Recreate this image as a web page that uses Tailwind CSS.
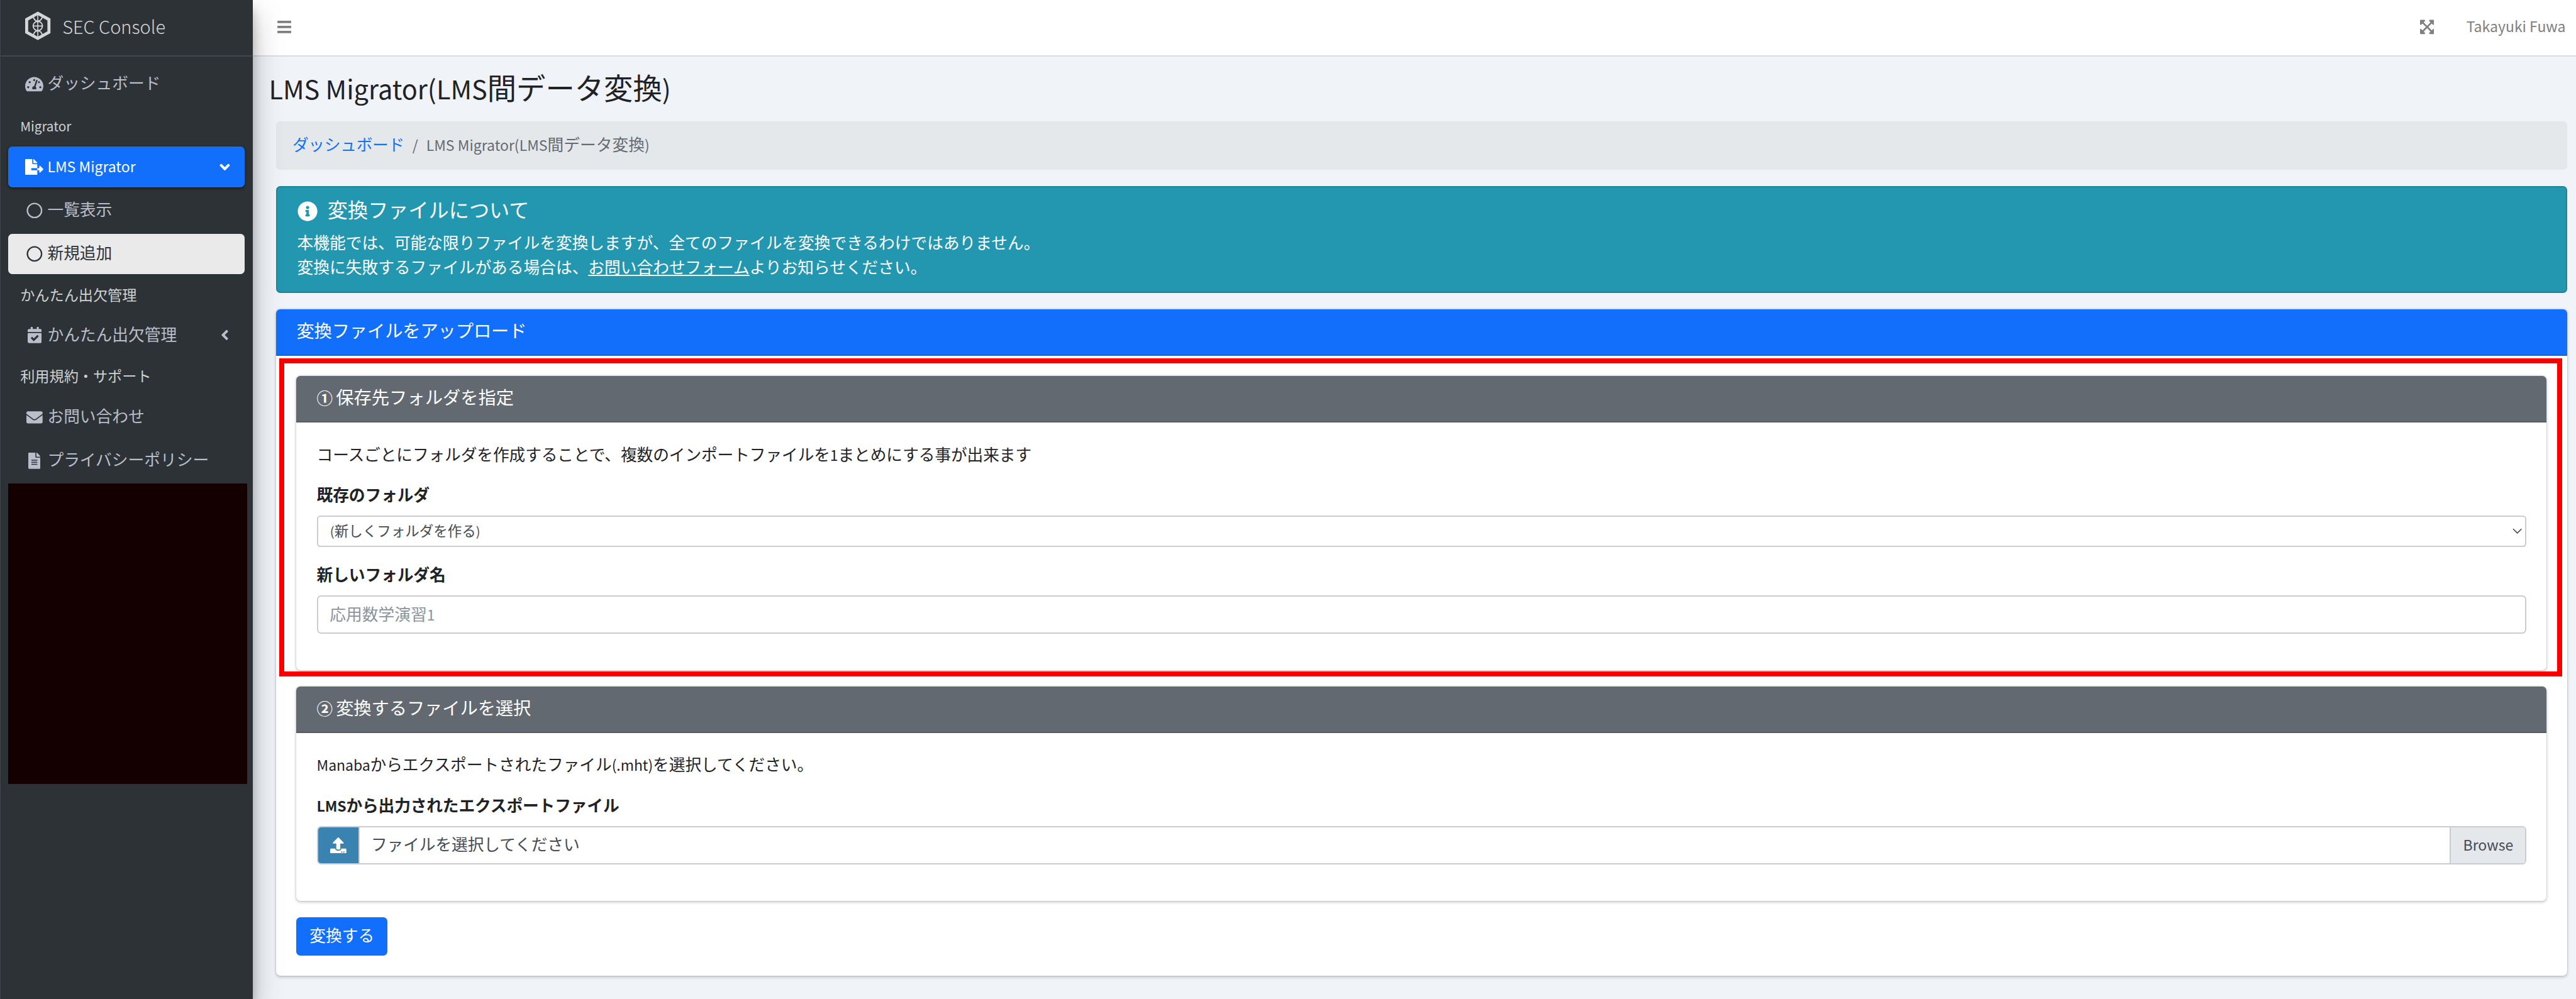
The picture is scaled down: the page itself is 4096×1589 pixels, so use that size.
<!DOCTYPE html>
<html lang="ja" class="text-[25.741px]">
<head>
<meta charset="utf-8">
<title>LMS Migrator | SEC Console</title>
<script src="https://cdn.jsdelivr.net/npm/@tailwindcss/browser@4"></script>
</head>
<body class="h-screen overflow-hidden bg-[#f0f4f8] font-[Inter,'Noto_Sans_CJK_JP',sans-serif] text-base leading-normal text-[#1f2327]">
<svg class="hidden">
  <symbol id="i-circle" viewBox="0 0 512 512"><path d="M256 8C119 8 8 119 8 256s111 248 248 248 248-111 248-248S393 8 256 8zm0 448c-110.5 0-200-89.5-200-200S145.5 56 256 56s200 89.5 200 200-89.5 200-200 200z"/></symbol>
  <symbol id="i-angle" viewBox="0 0 256 512"><path d="M31.7 239l136-136c9.4-9.4 24.6-9.4 33.9 0l22.6 22.6c9.4 9.4 9.4 24.6 0 33.9L127.9 256l96.4 96.4c9.4 9.4 9.4 24.6 0 33.9L201.7 409c-9.4 9.4-24.6 9.4-33.9 0l-136-136c-9.5-9.4-9.5-24.6-.1-34z"/></symbol>
</svg>
<div class="flex h-full">

  <!-- Sidebar -->
  <aside class="relative z-10 h-full w-[15.625rem] shrink-0 border-l border-[#3d4449] bg-[#2d3236] text-[#b9becb] shadow-[0_22px_45px_rgba(0,0,0,.25),0_16px_16px_rgba(0,0,0,.22)]">
    <div class="flex h-[3.5rem] items-center border-b-2 border-[#40484e] pl-[1.53rem] text-[#d5d6d7]">
      <svg class="mt-[-0.2rem] h-[1.8rem] w-[1.5625rem]" viewBox="50 22 50 57.6" fill="none" stroke="currentColor">
        <path stroke-width="6" d="M75 26L97 38.2V63.4L75 75.6L53 63.4V38.2Z"/>
        <path stroke-width="2" d="M75 24V78M65 51H85"/>
        <circle stroke-width="2.4" cx="75" cy="51" r="9.2"/>
        <path stroke-width="2.4" d="M66 30C66 37 70 41.5 75 41.5S84 37 84 30M66 72C66 65 70 60.5 75 60.5S84 65 84 72"/>
      </svg>
      <span class="-mt-[0.15rem] ml-[0.72rem] font-['Noto_Sans_CJK_JP',sans-serif] text-[1.125rem] font-light">SEC Console</span>
    </div>
    <nav class="-ml-px pt-[0.4375rem]">
      <a class="mx-2 flex h-10 items-center pl-[0.83rem]">
        <span class="flex w-[1.6rem] justify-center"><svg class="h-4 w-[1.125rem]" fill="currentColor" viewBox="0 0 576 512"><path d="M288 32C128.94 32 0 160.94 0 320c0 52.8 14.25 102.26 39.06 144.8 5.61 9.62 16.3 15.2 27.44 15.2h443c11.14 0 21.83-5.58 27.44-15.2C561.75 422.26 576 372.8 576 320c0-159.06-128.94-288-288-288zm0 64c14.71 0 26.58 10.13 30.32 23.65-1.11 2.26-2.64 4.23-3.45 6.67l-9.22 27.67c-5.13 3.49-10.97 6.01-17.64 6.01-17.67 0-32-14.33-32-32S270.33 96 288 96zM96 384c-17.67 0-32-14.33-32-32s14.33-32 32-32 32 14.33 32 32-14.33 32-32 32zm48-160c-17.67 0-32-14.33-32-32s14.33-32 32-32 32 14.33 32 32-14.33 32-32 32zm246.77-72.41l-61.33 184C343.13 347.33 352 364.54 352 384c0 11.72-3.38 22.55-8.88 32H232.88c-5.5-9.45-8.88-20.28-8.88-32 0-33.94 26.5-61.43 59.9-63.59l61.34-184.01c4.17-12.56 17.73-19.45 30.36-15.17 12.57 4.19 19.35 17.79 15.17 30.36zm14.66 57.2l15.52-46.55c3.47-1.29 7.13-2.23 11.05-2.23 17.67 0 32 14.33 32 32s-14.33 32-32 32c-11.38-.01-20.89-6.28-26.57-15.22zM480 384c-17.67 0-32-14.33-32-32s14.33-32 32-32 32 14.33 32 32-14.33 32-32 32z"/></svg></span>
        <span>ダッシュボード</span>
      </a>
      <div class="h-[2.625rem] pl-[1.25rem] pt-[0.72rem] text-[0.9rem] text-[#ced2d3]"><span class="font-['Noto_Sans_CJK_JP',sans-serif] text-[0.895em]">Migrator</span></div>
      <a class="mx-2 flex h-10 items-center rounded-[0.25rem] bg-[#126ffb] pl-[0.83rem] pr-4 text-white shadow-[0_1.6px_4.8px_rgba(0,0,0,.24),0_1.6px_3.2px_rgba(0,0,0,.3)]">
        <span class="flex w-[1.6rem] justify-center"><svg class="h-4 w-[1.125rem]" fill="currentColor" viewBox="0 0 576 512"><path d="M384 121.9c0-6.3-2.5-12.4-7-16.9L279.1 7c-4.5-4.5-10.6-7-17-7H256v128h128zM571 308l-95.7-96.4c-10.1-10.1-27.4-3-27.4 11.3V288h-64v64h64v65.2c0 14.3 17.3 21.4 27.4 11.3L571 332c6.6-6.6 6.6-17.4 0-24zm-379 28v-32c0-8.8 7.2-16 16-16h176V160H248c-13.2 0-24-10.8-24-24V0H24C10.7 0 0 10.7 0 24v464c0 13.3 10.7 24 24 24h336c13.3 0 24-10.7 24-24V352H208c-8.8 0-16-7.2-16-16z"/></svg></span>
        <span><span class="font-['Noto_Sans_CJK_JP',sans-serif] text-[0.895em]">LMS Migrator</span></span>
        <svg class="ml-auto h-4 w-2 -rotate-90" fill="currentColor"><use href="#i-angle"/></svg>
      </a>
      <a class="mx-2 mt-[0.1875rem] flex h-10 items-center pl-[0.83rem]">
        <span class="flex w-[1.6rem] justify-center"><svg class="size-4" fill="currentColor"><use href="#i-circle"/></svg></span>
        <span>一覧表示</span>
      </a>
      <a class="mx-2 mt-[0.1875rem] flex h-10 items-center rounded-[0.25rem] bg-[#eaeaea] pl-[0.83rem] text-[#2f3438]">
        <span class="flex w-[1.6rem] justify-center"><svg class="size-4" fill="currentColor"><use href="#i-circle"/></svg></span>
        <span>新規追加</span>
      </a>
      <div class="h-[2.53125rem] pl-[1.25rem] pt-[0.67rem] text-[0.9rem] text-[#ced2d3]">かんたん出欠管理</div>
      <a class="mx-2 flex h-10 items-center pl-[0.83rem] pr-4">
        <span class="flex w-[1.6rem] justify-center"><svg class="h-4 w-[0.875rem]" fill="currentColor" viewBox="0 0 448 512"><path d="M436 160H12c-6.627 0-12-5.373-12-12v-36c0-26.51 21.49-48 48-48h48V12c0-6.627 5.373-12 12-12h40c6.627 0 12 5.373 12 12v52h128V12c0-6.627 5.373-12 12-12h40c6.627 0 12 5.373 12 12v52h48c26.51 0 48 21.49 48 48v36c0 6.627-5.373 12-12 12zM12 192h424c6.627 0 12 5.373 12 12v260c0 26.51-21.49 48-48 48H48c-26.51 0-48-21.49-48-48V204c0-6.627 5.373-12 12-12zm333.296 95.947l-28.169-28.398c-4.667-4.705-12.265-4.736-16.97-.068L194.12 364.665l-45.98-46.352c-4.667-4.705-12.266-4.736-16.971-.068l-28.397 28.17c-4.705 4.667-4.736 12.265-.068 16.97l82.601 83.269c4.667 4.705 12.265 4.736 16.97.068l142.953-141.805c4.705-4.667 4.736-12.265.068-16.97z"/></svg></span>
        <span>かんたん出欠管理</span>
        <svg class="ml-auto h-4 w-2" fill="currentColor"><use href="#i-angle"/></svg>
      </a>
      <div class="h-[2.5625rem] pl-[1.25rem] pt-[0.64rem] text-[0.9rem] text-[#ced2d3]">利用規約・サポート</div>
      <a class="mx-2 flex h-10 items-center pl-[0.83rem]">
        <span class="flex w-[1.6rem] justify-center"><svg class="size-4" fill="currentColor" viewBox="0 0 512 512"><path d="M502.3 190.8c3.9-3.1 9.7-.2 9.7 4.7V400c0 26.5-21.5 48-48 48H48c-26.5 0-48-21.5-48-48V195.6c0-5 5.7-7.8 9.7-4.7 22.4 17.4 52.1 39.5 154.1 113.6 21.1 15.4 56.7 47.8 92.2 47.6 35.7.3 72-32.8 92.3-47.6 102-74.1 131.6-96.3 154-113.7zM256 320c23.2.4 56.6-29.2 73.4-41.4 132.7-96.3 142.8-104.7 173.4-128.7 5.8-4.5 9.2-11.5 9.2-18.9v-19c0-26.5-21.5-48-48-48H48c-26.5 0-48 21.5-48 48v19c0 7.4 3.4 14.3 9.2 18.9 30.6 23.9 40.7 32.4 173.4 128.7 16.8 12.2 50.2 41.8 73.4 41.4z"/></svg></span>
        <span>お問い合わせ</span>
      </a>
      <a class="mx-2 mt-[0.1875rem] flex h-10 items-center pl-[0.83rem]">
        <span class="flex w-[1.6rem] justify-center"><svg class="h-4 w-3" fill="currentColor" viewBox="0 0 384 512"><path d="M224 136V0H24C10.7 0 0 10.7 0 24v464c0 13.3 10.7 24 24 24h336c13.3 0 24-10.7 24-24V160H248c-13.2 0-24-10.8-24-24zm64 236c0 6.6-5.4 12-12 12H108c-6.6 0-12-5.4-12-12v-8c0-6.6 5.4-12 12-12h168c6.6 0 12 5.4 12 12v8zm0-64c0 6.6-5.4 12-12 12H108c-6.6 0-12-5.4-12-12v-8c0-6.6 5.4-12 12-12h168c6.6 0 12 5.4 12 12v8zm0-72v8c0 6.6-5.4 12-12 12H108c-6.6 0-12-5.4-12-12v-8c0-6.6 5.4-12 12-12h168c6.6 0 12 5.4 12 12zm96-114.1v6.1H256V0h6.1c6.4 0 12.5 2.5 17 7l97.9 98c4.5 4.5 7 10.6 7 16.9z"/></svg></span>
        <span>プライバシーポリシー</span>
      </a>
      <div class="ml-2 mt-[0.15rem] h-[18.6rem] w-[14.78rem] bg-[#140000]"></div>
    </nav>
  </aside>

  <div class="flex h-full min-w-0 flex-1 flex-col">
    <!-- Top bar -->
    <header class="flex h-[3.5rem] shrink-0 items-center border-b-2 border-[#d8dde1] bg-white pl-[1.5rem] pr-[0.64rem] text-[#808080]">
      <svg class="-mt-[0.1rem] h-4 w-[0.875rem]" fill="currentColor" viewBox="0 0 448 512"><path d="M16 132h416c8.837 0 16-7.163 16-16V76c0-8.837-7.163-16-16-16H16C7.163 60 0 67.163 0 76v40c0 8.837 7.163 16 16 16zm0 160h416c8.837 0 16-7.163 16-16v-40c0-8.837-7.163-16-16-16H16c-8.837 0-16 7.163-16 16v40c0 8.837 7.163 16 16 16zm0 160h416c8.837 0 16-7.163 16-16v-40c0-8.837-7.163-16-16-16H16c-8.837 0-16 7.163-16 16v40c0 8.837 7.163 16 16 16z"/></svg>
      <svg class="-mt-[0.1rem] ml-auto h-4 w-[0.875rem]" fill="currentColor" viewBox="0 0 448 512"><path d="M448 344v112a23.94 23.94 0 0 1-24 24H312c-21.39 0-32.09-25.9-17-41l36.2-36.2L224 295.6 116.77 402.9 153 439c15.09 15.1 4.39 41-17 41H24a23.94 23.94 0 0 1-24-24V344c0-21.4 25.89-32.1 41-17l36.19 36.2L184.46 256 77.18 148.7 41 185c-15.1 15.1-41 4.4-41-17V56a23.94 23.94 0 0 1 24-24h112c21.39 0 32.09 25.9 17 41l-36.2 36.2L224 216.4l107.23-107.3L295 73c-15.09-15.1-4.39-41 17-41h112a23.94 23.94 0 0 1 24 24v112c0 21.4-25.89 32.1-41 17l-36.19-36.2L263.54 256l107.28 107.3L407 327.1c15.1-15.2 41-4.5 41 16.9z"/></svg>
      <span class="-mt-[0.1rem] ml-[2rem]"><span class="font-['Noto_Sans_CJK_JP',sans-serif] text-[0.895em]">Takayuki Fuwa</span></span>
    </header>

    <main class="pl-[1.4375rem] pr-[0.5625rem] pt-[0.9375rem]">
      <h1 class="-ml-[0.46rem] text-[1.8rem] leading-[1.2]"><span class="font-['Noto_Sans_CJK_JP',sans-serif] text-[0.895em]">LMS Migrator(LMS</span>間データ変換<span class="font-['Noto_Sans_CJK_JP',sans-serif] text-[0.895em]">)</span></h1>

      <ol class="mt-[0.9rem] flex h-12 items-center rounded-[0.25rem] bg-[#e4e8eb] px-4 text-[#646b72]">
        <li class="tracking-[-0.012em] text-[#1272f9]">ダッシュボード</li>
        <li class="pl-2"><span class="pr-2 font-['Noto_Sans_CJK_JP',sans-serif] text-[0.895em]">/</span><span class="font-['Noto_Sans_CJK_JP',sans-serif] text-[0.895em]">LMS Migrator(LMS</span>間データ変換<span class="font-['Noto_Sans_CJK_JP',sans-serif] text-[0.895em]">)</span></li>
      </ol>

      <section class="mt-4 h-[6.625rem] rounded-[0.25rem] border-2 border-[#1f8494] bg-[#2497b0] px-[1.22rem] pt-[0.72rem] text-white">
        <h5 class="flex h-[1.5rem] items-center text-[1.25rem] leading-[1.2]">
          <svg class="mr-[0.625rem] size-[1.25rem]" fill="currentColor" viewBox="0 0 512 512"><path d="M256 8C119.043 8 8 119.083 8 256c0 136.997 111.043 248 248 248s248-111.003 248-248C504 119.083 392.957 8 256 8zm0 110c23.196 0 42 18.804 42 42s-18.804 42-42 42-42-18.804-42-42 18.804-42 42-42zm56 254c0 6.627-5.373 12-12 12h-88c-6.627 0-12-5.373-12-12v-24c0-6.627 5.373-12 12-12h12v-64h-12c-6.627 0-12-5.373-12-12v-24c0-6.627 5.373-12 12-12h64c6.627 0 12 5.373 12 12v100h12c6.627 0 12 5.373 12 12v24z"/></svg>
          変換ファイルについて
        </h5>
        <p class="mt-2 tracking-[-0.001em]">本機能では、可能な限りファイルを変換しますが、全てのファイルを変換できるわけではありません。<br>変換に失敗するファイルがある場合は、<a class="underline decoration-2 underline-offset-[0.09em]">お問い合わせフォーム</a>よりお知らせください。</p>
      </section>

      <section class="relative mt-4 rounded-[0.25rem] bg-white shadow-[0_0_1.6px_rgba(0,0,0,.3),0_1.6px_4.8px_rgba(0,0,0,.22)]">
        <div class="flex h-[2.875rem] items-center rounded-t-[0.25rem] border-b-2 border-[#1264de] bg-[#126ffb] px-5 text-[1.1rem] leading-[1.2] tracking-[-0.005em] text-white">変換ファイルをアップロード</div>
        <div class="p-5">

          <div class="rounded-[0.25rem] bg-white shadow-[0_0_1.6px_rgba(0,0,0,.3),0_1.6px_4.8px_rgba(0,0,0,.22)]">
            <div class="flex h-[2.875rem] items-center rounded-t-[0.25rem] border-b-2 border-[#555c62] bg-[#626970] px-5 text-[1.1rem] leading-[1.2] text-white"><span class="w-[1.19rem]"><span class="align-[0.03em] font-['Noto_Sans_CJK_JP',sans-serif] text-[0.9em] font-bold">①</span></span>保存先フォルダを指定</div>
            <div class="p-5">
              <p class="tracking-[-0.005em]">コースごとにフォルダを作成することで、複数のインポートファイルを<span class="font-['Noto_Sans_CJK_JP',sans-serif] text-[0.895em]">1</span>まとめにする事が出来ます</p>
              <div class="mt-4 font-bold tracking-[-0.004em]">既存のフォルダ</div>
              <div class="mt-2 flex h-[1.9375rem] items-center justify-between rounded-[0.2rem] border-2 border-[#c9cdd3] bg-white pl-[0.75rem] pr-[0.2rem] text-[0.875rem] text-[#464c53]">
                <span><span class="font-['Noto_Sans_CJK_JP',sans-serif] text-[0.895em]">(</span>新しくフォルダを作る<span class="font-['Noto_Sans_CJK_JP',sans-serif] text-[0.895em]">)</span></span>
                <svg class="h-[0.4rem] w-[0.6rem]" viewBox="0 0 19 13" fill="none" stroke="#40464c" stroke-width="2"><path d="M1 1.5L9.5 10L18 1.5"/></svg>
              </div>
              <div class="mt-4 font-bold tracking-[-0.004em]">新しいフォルダ名</div>
              <div class="mb-4 mt-2 flex h-[2.375rem] items-center rounded-[0.25rem] border-2 border-[#c9cdd3] bg-white pl-[0.73rem] text-[#8a939b]"><span>応用数学演習<span class="font-['Noto_Sans_CJK_JP',sans-serif] text-[0.895em]">1</span></span></div>
            </div>
          </div>

          <div class="mt-4 rounded-[0.25rem] bg-white shadow-[0_0_1.6px_rgba(0,0,0,.3),0_1.6px_4.8px_rgba(0,0,0,.22)]">
            <div class="flex h-[2.875rem] items-center rounded-t-[0.25rem] border-b-2 border-[#555c62] bg-[#626970] px-5 text-[1.1rem] leading-[1.2] tracking-[-0.004em] text-white"><span class="w-[1.19rem]"><span class="align-[0.03em] font-['Noto_Sans_CJK_JP',sans-serif] text-[0.9em] font-bold">②</span></span>変換するファイルを選択</div>
            <div class="p-5">
              <p class="tracking-[-0.003em]"><span class="font-['Noto_Sans_CJK_JP',sans-serif] text-[0.895em]">Manaba</span>からエクスポートされたファイル<span class="font-['Noto_Sans_CJK_JP',sans-serif] text-[0.895em]">(.mht)</span>を選択してください。</p>
              <div class="mt-4 font-bold tracking-[-0.006em]"><span class="font-['Noto_Sans_CJK_JP',sans-serif] text-[0.895em]">LMS</span>から出力されたエクスポートファイル</div>
              <div class="mb-4 mt-2 flex h-[2.375rem] overflow-hidden rounded-[0.25rem] border-2 border-[#c9cdd3] bg-white text-[#464c53]">
                <div class="flex w-[2.5rem] items-center justify-center bg-[#3a82af] text-white">
                  <svg class="size-4" fill="currentColor" viewBox="0 0 512 512"><path d="M296 384h-80c-13.3 0-24-10.7-24-24V192h-87.7c-17.8 0-26.7-21.5-14.1-34.1L242.3 5.7c7.5-7.5 19.8-7.5 27.3 0l152.2 152.2c12.6 12.6 3.7 34.1-14.1 34.1H320v168c0 13.3-10.7 24-24 24zm216-8v112c0 13.3-10.7 24-24 24H24c-13.3 0-24-10.7-24-24V376c0-13.3 10.7-24 24-24h136v8c0 30.9 25.1 56 56 56h80c30.9 0 56-25.1 56-56v-8h136c13.3 0 24 10.7 24 24zm-124 88c0-11-9-20-20-20s-20 9-20 20 9 20 20 20 20-9 20-20zm64 0c0-11-9-20-20-20s-20 9-20 20 9 20 20 20 20-9 20-20z"/></svg>
                </div>
                <div class="flex flex-1 items-center border-l-2 border-[#c9cdd3] pl-[0.7rem] tracking-[-0.004em]">ファイルを選択してください</div>
                <div class="flex w-[4.66rem] items-center border-l-2 border-[#c9cdd3] bg-[#e4e8eb] pl-[0.75rem]"><span><span class="font-['Noto_Sans_CJK_JP',sans-serif] text-[0.895em]">Browse</span></span></div>
              </div>
            </div>
          </div>

          <button class="mt-4 flex h-[2.375rem] w-[5.625rem] items-center justify-center rounded-[0.25rem] bg-[#126ffb] text-white">変換する</button>
        </div>

        <!-- Highlight frame around step 1 -->
        <div class="pointer-events-none absolute left-[0.1875rem] right-[0.28rem] top-[3.03rem] h-[19.64rem] border-[8px] border-[#f80000]"></div>
      </section>
    </main>
  </div>
</div>
</body>
</html>
